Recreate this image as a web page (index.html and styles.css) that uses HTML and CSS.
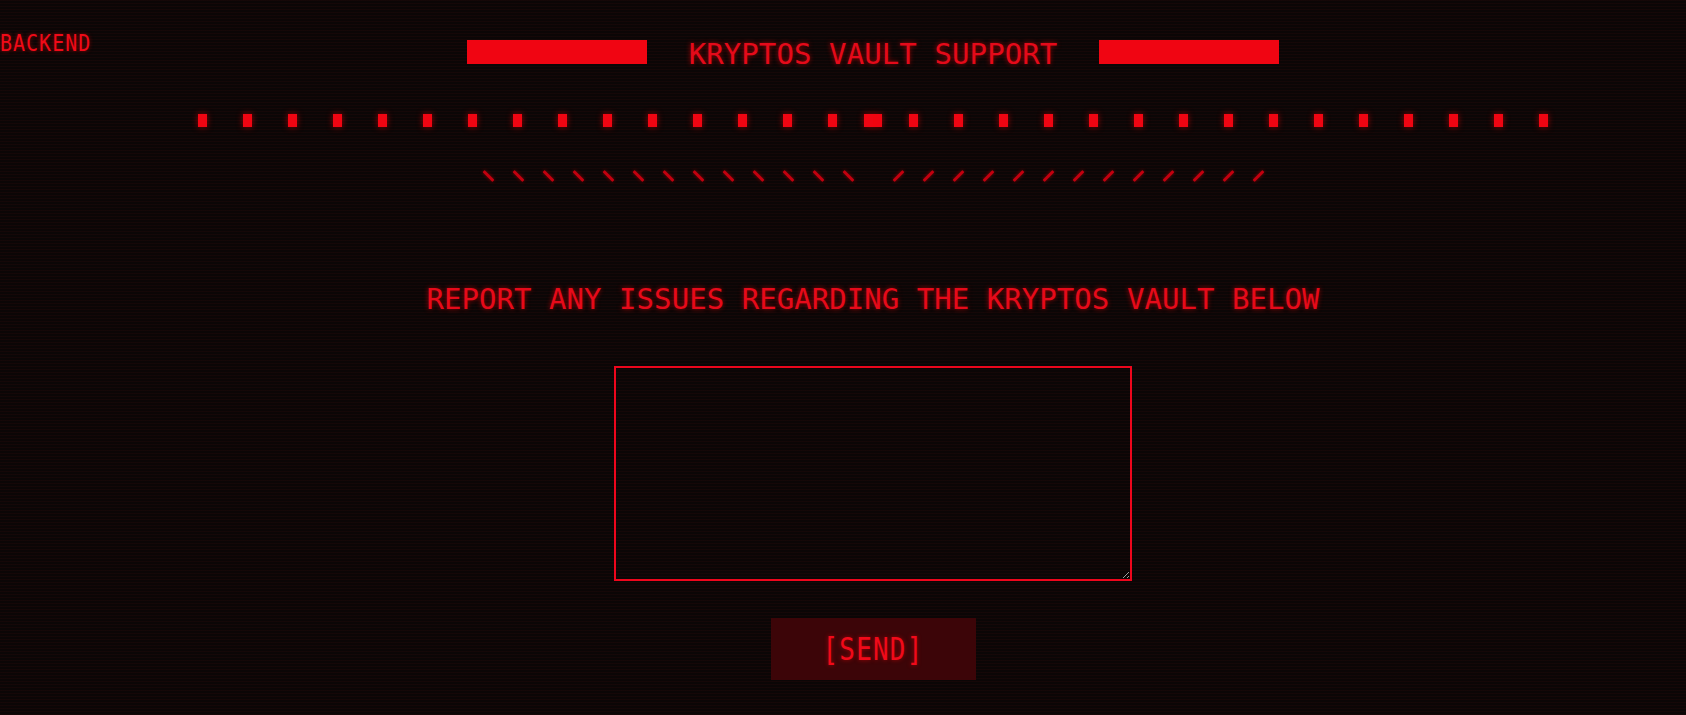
FILE: index.html
```html
<!DOCTYPE html>
<html>
<head>
<meta charset="utf-8">
<title>Kryptos Vault Support</title>
<link rel="stylesheet" href="styles.css">
</head>
<body>
<div class="page">
  <nav class="side"><a class="back" href="#">BACKEND</a></nav>
  <main class="main">
    <header class="head">
      <span class="bar"></span>
      <h1 class="title">KRYPTOS VAULT SUPPORT</h1>
      <span class="bar"></span>
    </header>
    <div class="dots">
      <div class="dots-half">
        <i></i><i></i><i></i><i></i><i></i><i></i><i></i><i></i><i></i><i></i><i></i><i></i><i></i><i></i><i></i><i></i>
      </div>
      <div class="dots-half dots-right">
        <i></i><i></i><i></i><i></i><i></i><i></i><i></i><i></i><i></i><i></i><i></i><i></i><i></i><i></i><i></i><i></i>
      </div>
    </div>
    <div class="slashes">
      <div class="sl-group back-sl">
        <i></i><i></i><i></i><i></i><i></i><i></i><i></i><i></i><i></i><i></i><i></i><i></i><i></i>
      </div>
      <div class="sl-group fwd-sl">
        <i></i><i></i><i></i><i></i><i></i><i></i><i></i><i></i><i></i><i></i><i></i><i></i><i></i>
      </div>
    </div>
    <p class="sub">REPORT ANY ISSUES REGARDING THE KRYPTOS VAULT BELOW</p>
    <textarea class="msg"></textarea>
    <button class="send" type="button"><span class="send-label">[SEND]</span></button>
  </main>
</div>
</body>
</html>
```
FILE: styles.css
```css
html, body {
  margin: 0;
  padding: 0;
  height: 100%;
  overflow: hidden;
}
body {
  background-color: #0b0606;
  background-image: repeating-linear-gradient(to bottom, rgba(40, 10, 10, 0.35) 0px, rgba(40, 10, 10, 0.35) 1px, rgba(0, 0, 0, 0) 1px, rgba(0, 0, 0, 0) 3px);
  font-family: "DejaVu Sans Mono", "Liberation Mono", monospace;
  color: #ec0c1c;
}
.page {
  display: flex;
  min-height: 100%;
}
.side {
  width: 60px;
  flex: none;
  padding-top: 29px;
  white-space: nowrap;
}
.back {
  display: inline-block;
  color: #f00a18;
  text-decoration: none;
  font-size: 20px;
  letter-spacing: 1px;
  transform: scaleY(1.16);
  transform-origin: left top;
  text-shadow: 0 0 4px rgba(255, 0, 0, 0.55);
}
.main {
  flex: 1;
  display: flex;
  flex-direction: column;
  align-items: center;
  padding-top: 40px;
}
.head {
  display: flex;
  align-items: flex-start;
  gap: 42px;
  height: 24px;
}
.bar {
  width: 180px;
  height: 24px;
  background: #f00512;
}
.title {
  margin: 0;
  padding-top: 4px;
  font-size: 29px;
  line-height: 20px;
  font-weight: normal;
  letter-spacing: 0.1px;
  color: #e40a1a;
  text-shadow: 0 0 5px rgba(255, 0, 0, 0.6);
  white-space: nowrap;
}
.dots {
  display: flex;
  margin-top: 50px;
}
.dots-half {
  display: flex;
  gap: 36px;
}
.dots-right {
  margin-left: -18px;
}
.dots i {
  display: block;
  width: 9px;
  height: 13px;
  background: #f00512;
  box-shadow: 0 0 6px rgba(255, 0, 0, 0.55);
}
.slashes {
  display: flex;
  gap: 47px;
  margin-top: 43px;
  height: 12px;
  align-items: center;
}
.sl-group {
  display: flex;
  gap: 27px;
  align-items: center;
}
.sl-group i {
  display: block;
  width: 3px;
  height: 14px;
  border-radius: 1px;
  background: #c2000f;
  box-shadow: 0 0 4px rgba(255, 0, 0, 0.45);
}
.back-sl i {
  transform: rotate(-45deg);
}
.fwd-sl i {
  transform: rotate(45deg);
}
.sub {
  margin: 100px 0 0;
  font-size: 29px;
  line-height: 34px;
  letter-spacing: 0.05px;
  color: #e60a1a;
  text-shadow: 0 0 5px rgba(255, 0, 0, 0.6);
  white-space: nowrap;
}
.msg {
  margin-top: 50px;
  width: 518px;
  height: 215px;
  box-sizing: border-box;
  background: transparent;
  border: 2px solid #ee061c;
  outline: none;
  color: #ec0c1c;
  font-family: inherit;
  font-size: 16px;
}
.send {
  margin-top: 37px;
  width: 205px;
  height: 62px;
  border: none;
  background: #3c0508;
  color: #f00a1a;
  font-family: inherit;
  cursor: pointer;
  padding: 0;
  display: flex;
  align-items: center;
  justify-content: center;
}
.send-label {
  display: inline-block;
  font-size: 26px;
  letter-spacing: 1.2px;
  transform: scaleY(1.2);
  text-shadow: 0 0 4px rgba(255, 0, 0, 0.5);
}
```
